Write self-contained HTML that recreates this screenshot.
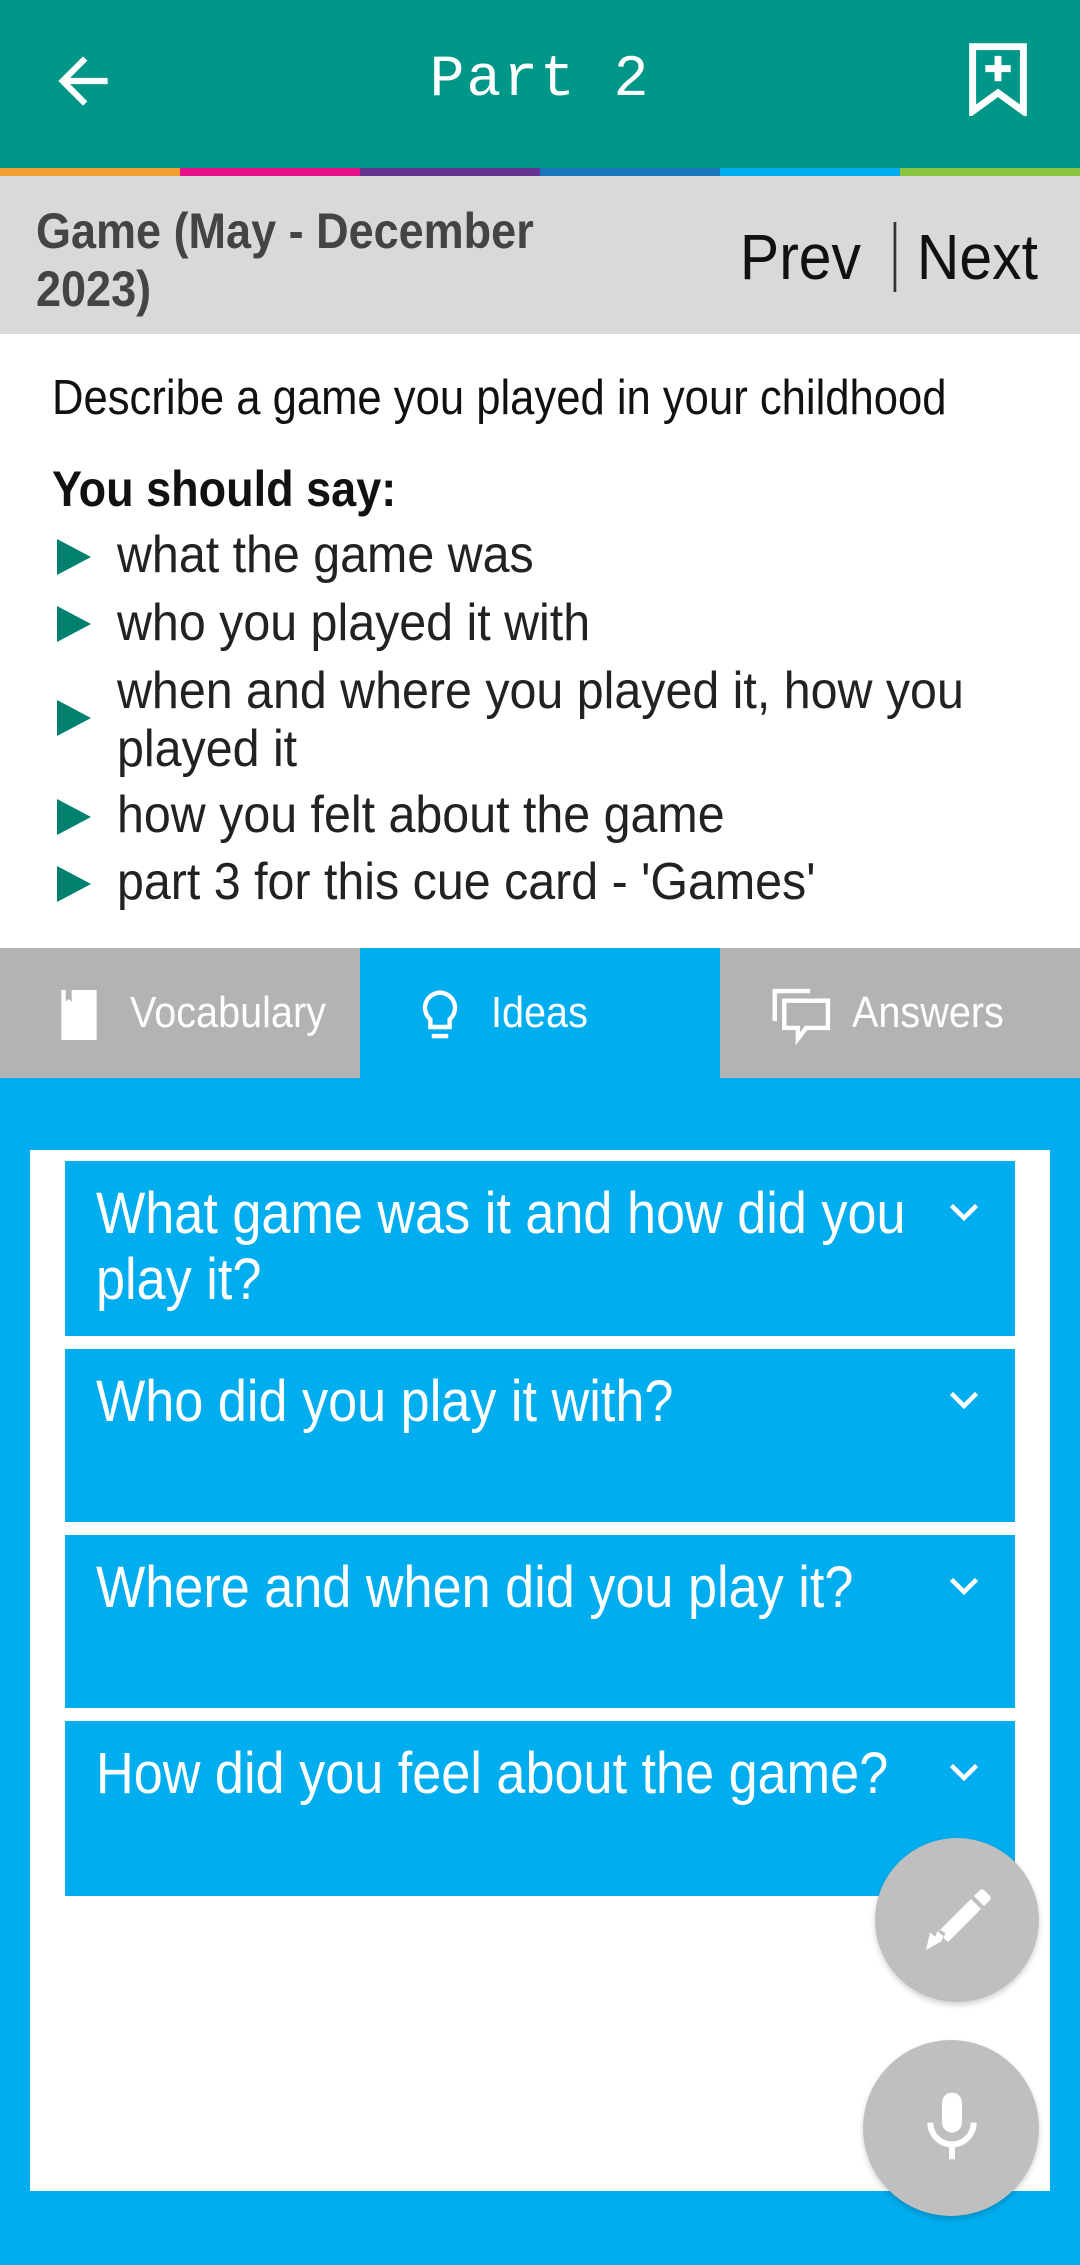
<!DOCTYPE html>
<html><head><meta charset="utf-8"><style>
*{margin:0;padding:0;box-sizing:border-box}
body{width:1080px;height:2265px;overflow:hidden;background:#00adee;font-family:"Liberation Sans",sans-serif;position:relative}
.abs{position:absolute}
.sx{transform-origin:0 0;white-space:nowrap}
.hdr{left:0;top:0;width:1080px;height:168px;background:#009688}
.title{left:0;width:1080px;top:48px;text-align:center;color:#fff;font-family:"Liberation Mono",monospace;font-size:58px;letter-spacing:2px}
.bar{top:168px;height:8px;width:180px}
.gray{top:176px;left:0;width:1080px;height:158px;background:#d9d9d9}
.gt{left:36px;top:202px;font-size:50px;font-weight:bold;color:#444;line-height:58px;transform:scaleX(.9)}
.pn{right:42px;top:222px;font-size:64px;color:#111;line-height:70px;transform:scaleX(.92);transform-origin:100% 0}
.white{top:334px;left:0;width:1080px;height:614px;background:#fff}
.desc{left:52px;top:370px;font-size:49px;color:#111;transform:scaleX(.89)}
.say{left:52px;top:460px;font-size:50px;font-weight:bold;color:#111;transform:scaleX(.9)}
.bl{left:117px;font-size:52px;color:#222;line-height:58px;transform:scaleX(.93)}
.tri{left:57px;width:0;height:0;border-top:18px solid transparent;border-bottom:18px solid transparent;border-left:34px solid #00806f}
.tab{top:948px;height:130px;width:360px;background:#b3b3b3;color:#fff;font-size:42px}
.tl{top:988px;font-size:44px;color:#fff;transform:scaleX(.9)}
.card{left:30px;top:1150px;width:1020px;height:1041px;background:#fff}
.item{left:65px;width:950px;background:#00adee;color:#fff}
.it{position:absolute;left:31px;top:20px;width:940px;font-size:58px;line-height:66px;transform:scaleX(.9);transform-origin:0 0}
.chev{right:36px;top:42px}
.fab{border-radius:50%;background:#bfbfbf;box-shadow:0 3px 6px rgba(0,0,0,.18)}
</style></head><body>
<div class="abs hdr"></div>
<svg class="abs" style="left:46px;top:44px" width="74" height="74" viewBox="0 0 24 24"><path d="M20 11H7.83l5.59-5.59L12 4l-8 8 8 8 1.41-1.41L7.83 13H20v-2z" fill="#fff"/></svg>
<div class="abs title">Part 2</div>
<svg class="abs" style="left:968px;top:42px" width="60" height="74" viewBox="0 0 26 32"><path d="M2 2h22v28l-11-8-11 8z" fill="none" stroke="#fff" stroke-width="3"/><path d="M11.5 6h3v4h4v3h-4v4h-3v-4h-4v-3h4z" fill="#fff"/></svg>
<div class="abs bar" style="left:0;background:#f0a030"></div>
<div class="abs bar" style="left:180px;background:#e5128a"></div>
<div class="abs bar" style="left:360px;background:#653490"></div>
<div class="abs bar" style="left:540px;background:#1b75bb"></div>
<div class="abs bar" style="left:720px;background:#00adee"></div>
<div class="abs bar" style="left:900px;background:#8cc63f"></div>
<div class="abs gray"></div>
<div class="abs gt sx">Game (May - December<br>2023)</div>
<div class="abs pn sx">Prev <span style="display:inline-block;width:3px;height:70px;background:#333;vertical-align:top;margin:0 22px 0 18px"></span>Next</div>
<div class="abs white"></div>
<div class="abs desc sx">Describe a game you played in your childhood</div>
<div class="abs say sx">You should say:</div>
<div class="abs tri" style="top:539px"></div><div class="abs bl sx" style="top:526px">what the game was</div>
<div class="abs tri" style="top:606px"></div><div class="abs bl sx" style="top:594px">who you played it with</div>
<div class="abs tri" style="top:700px"></div><div class="abs bl sx" style="top:662px">when and where you played it, how you<br>played it</div>
<div class="abs tri" style="top:799px"></div><div class="abs bl sx" style="top:786px">how you felt about the game</div>
<div class="abs tri" style="top:866px"></div><div class="abs bl sx" style="top:853px">part 3 for this cue card - 'Games'</div>

<div class="abs tab" style="left:0"></div>
<div class="abs tab" style="left:360px;background:#00adee"></div>
<div class="abs tab" style="left:720px;width:360px"></div>
<svg class="abs" style="left:58px;top:990px" width="42" height="50" viewBox="0 0 14 17"><path d="M1 0h12v17H1z" fill="#fff"/><path d="M2.5 0h2v4l-1-1-1 1z" fill="#b3b3b3"/></svg>
<div class="abs tl sx" style="left:130px">Vocabulary</div>
<svg class="abs" style="left:418px;top:988px" width="44" height="56" viewBox="0 0 16 20"><path d="M8 1.5a5.5 5.5 0 0 0-3.5 9.7V14h7v-2.8A5.5 5.5 0 0 0 8 1.5z" fill="none" stroke="#fff" stroke-width="1.6"/><rect x="5" y="16.5" width="6" height="1.6" fill="#fff"/></svg>
<div class="abs tl sx" style="left:491px">Ideas</div>
<svg class="abs" style="left:772px;top:988px" width="60" height="58" viewBox="0 0 22 21"><path d="M1 12V1h13" fill="none" stroke="#fff" stroke-width="1.6"/><path d="M4.5 4.5h16v10h-8l-3 4v-4h-5z" fill="none" stroke="#fff" stroke-width="1.6"/></svg>
<div class="abs tl sx" style="left:852px">Answers</div>

<div class="abs card"></div>
<div class="abs item" style="top:1161px;height:175px"><div class="it">What game was it and how did you play it?</div><svg class="abs chev" width="30" height="20" viewBox="0 0 12 8"><path d="M1 1l5 5 5-5" fill="none" stroke="#fff" stroke-width="1.8"/></svg></div>
<div class="abs item" style="top:1349px;height:173px"><div class="it">Who did you play it with?</div><svg class="abs chev" width="30" height="20" viewBox="0 0 12 8"><path d="M1 1l5 5 5-5" fill="none" stroke="#fff" stroke-width="1.8"/></svg></div>
<div class="abs item" style="top:1535px;height:173px"><div class="it">Where and when did you play it?</div><svg class="abs chev" width="30" height="20" viewBox="0 0 12 8"><path d="M1 1l5 5 5-5" fill="none" stroke="#fff" stroke-width="1.8"/></svg></div>
<div class="abs item" style="top:1721px;height:175px"><div class="it">How did you feel about the game?</div><svg class="abs chev" width="30" height="20" viewBox="0 0 12 8"><path d="M1 1l5 5 5-5" fill="none" stroke="#fff" stroke-width="1.8"/></svg></div>

<div class="abs fab" style="left:875px;top:1838px;width:164px;height:164px"></div>
<svg class="abs" style="left:916px;top:1880px" width="80" height="80" viewBox="0 0 24 24"><path d="M3 21l1.2-5.2 1.6 1.2.6-1.6 1.8 1.4-.6 1.6L3 21zM6.6 15.6L16.5 5.7l3 3-9.9 9.9-1.4-1.2.6-1.5-1.7-1.1z" fill="#fff"/><path d="M17.4 4.8l1.7-1.7a1 1 0 0 1 1.4 0l1.6 1.6a1 1 0 0 1 0 1.4l-1.7 1.7z" fill="#fff"/></svg>
<div class="abs fab" style="left:863px;top:2040px;width:176px;height:176px"></div>
<svg class="abs" style="left:912px;top:2086px" width="80" height="80" viewBox="0 0 24 24"><rect x="9" y="2" width="6" height="12" rx="3" fill="#fff"/><path d="M5.5 11a6.5 6.5 0 0 0 13 0" fill="none" stroke="#fff" stroke-width="1.8"/><rect x="11.1" y="17" width="1.8" height="5" fill="#fff"/></svg>
</body></html>
